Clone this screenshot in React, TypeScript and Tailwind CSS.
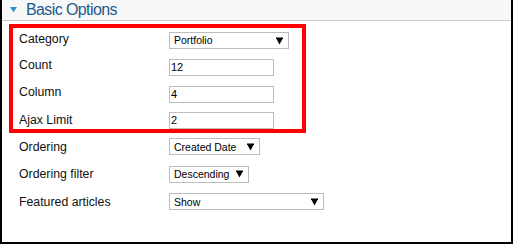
import React from "react";

function Arrow() {
  return (
    <svg width="7" height="8" viewBox="0 0 7 8" className="shrink-0">
      <path d="M0 1 H7 L3.5 7.5 Z" fill="#000" />
      <rect x="0" y="0.5" width="7" height="1.5" fill="#000" />
    </svg>
  );
}

function Select({ value, width }: { value: string; width: string }) {
  return (
    <div
      className={`flex h-[17px] items-center justify-between border border-[#bdbdbd] bg-white pl-[4px] pr-[5px] text-[10.5px] leading-none text-black ${width}`}
    >
      <span>{value}</span>
      <Arrow />
    </div>
  );
}

function Input({ value }: { value: string }) {
  return (
    <div className="flex h-[17px] w-[105px] items-center border border-[#bdbdbd] bg-white pl-[1px] text-[11px] leading-none text-black">
      {value}
    </div>
  );
}

function Row({
  label,
  children,
  h,
}: {
  label: string;
  children: React.ReactNode;
  h: string;
}) {
  return (
    <div className={`flex items-center ${h}`}>
      <div className="w-[150px] shrink-0 text-[12.3px] leading-none text-[#111]">{label}</div>
      {children}
    </div>
  );
}

export default function App() {
  return (
    <div
      className="h-[244px] w-[513px] border-b-2 border-l-2 border-r-2 border-black bg-white"
      style={{ fontFamily: '"Liberation Sans", Arial, sans-serif' }}
    >
      <div className="flex h-[21px] items-center border-b border-[#cccccc] bg-[#f8f8f8] pl-[8px]">
        <svg width="7" height="6" viewBox="0 0 7 6" className="mr-[9px]">
          <path d="M0 0 H7 L3.5 5.5 Z" fill="#2f95cf" />
        </svg>
        <span className="text-[16px] leading-none tracking-[-0.6px] text-[#1f5a8c]">
          Basic Options
        </span>
      </div>
      <div className="ml-[7px] mt-[3px] flex h-[109px] w-[297px] flex-col border-4 border-[#ff0000] pl-[6px] pt-[4px]">
        <Row label="Category" h="h-[26px] items-start pt-[1px]">
          <Select value="Portfolio" width="w-[120px] -mt-[1px]" />
        </Row>
        <Row label="Count" h="h-[27px] items-start pt-[1px]">
          <Input value="12" />
        </Row>
        <Row label="Column" h="h-[27px] items-start pt-[1px]">
          <Input value="4" />
        </Row>
        <Row label="Ajax Limit" h="h-[17px]">
          <Input value="2" />
        </Row>
      </div>
      <div className="pl-[17px]">
        <Row label="Ordering" h="h-[27.5px]">
          <Select value="Created Date" width="w-[91px]" />
        </Row>
        <Row label="Ordering filter" h="h-[27.5px]">
          <Select value="Descending" width="w-[80px]" />
        </Row>
        <Row label="Featured articles" h="h-[27.5px]">
          <Select value="Show" width="w-[155px]" />
        </Row>
      </div>
    </div>
  );
}
